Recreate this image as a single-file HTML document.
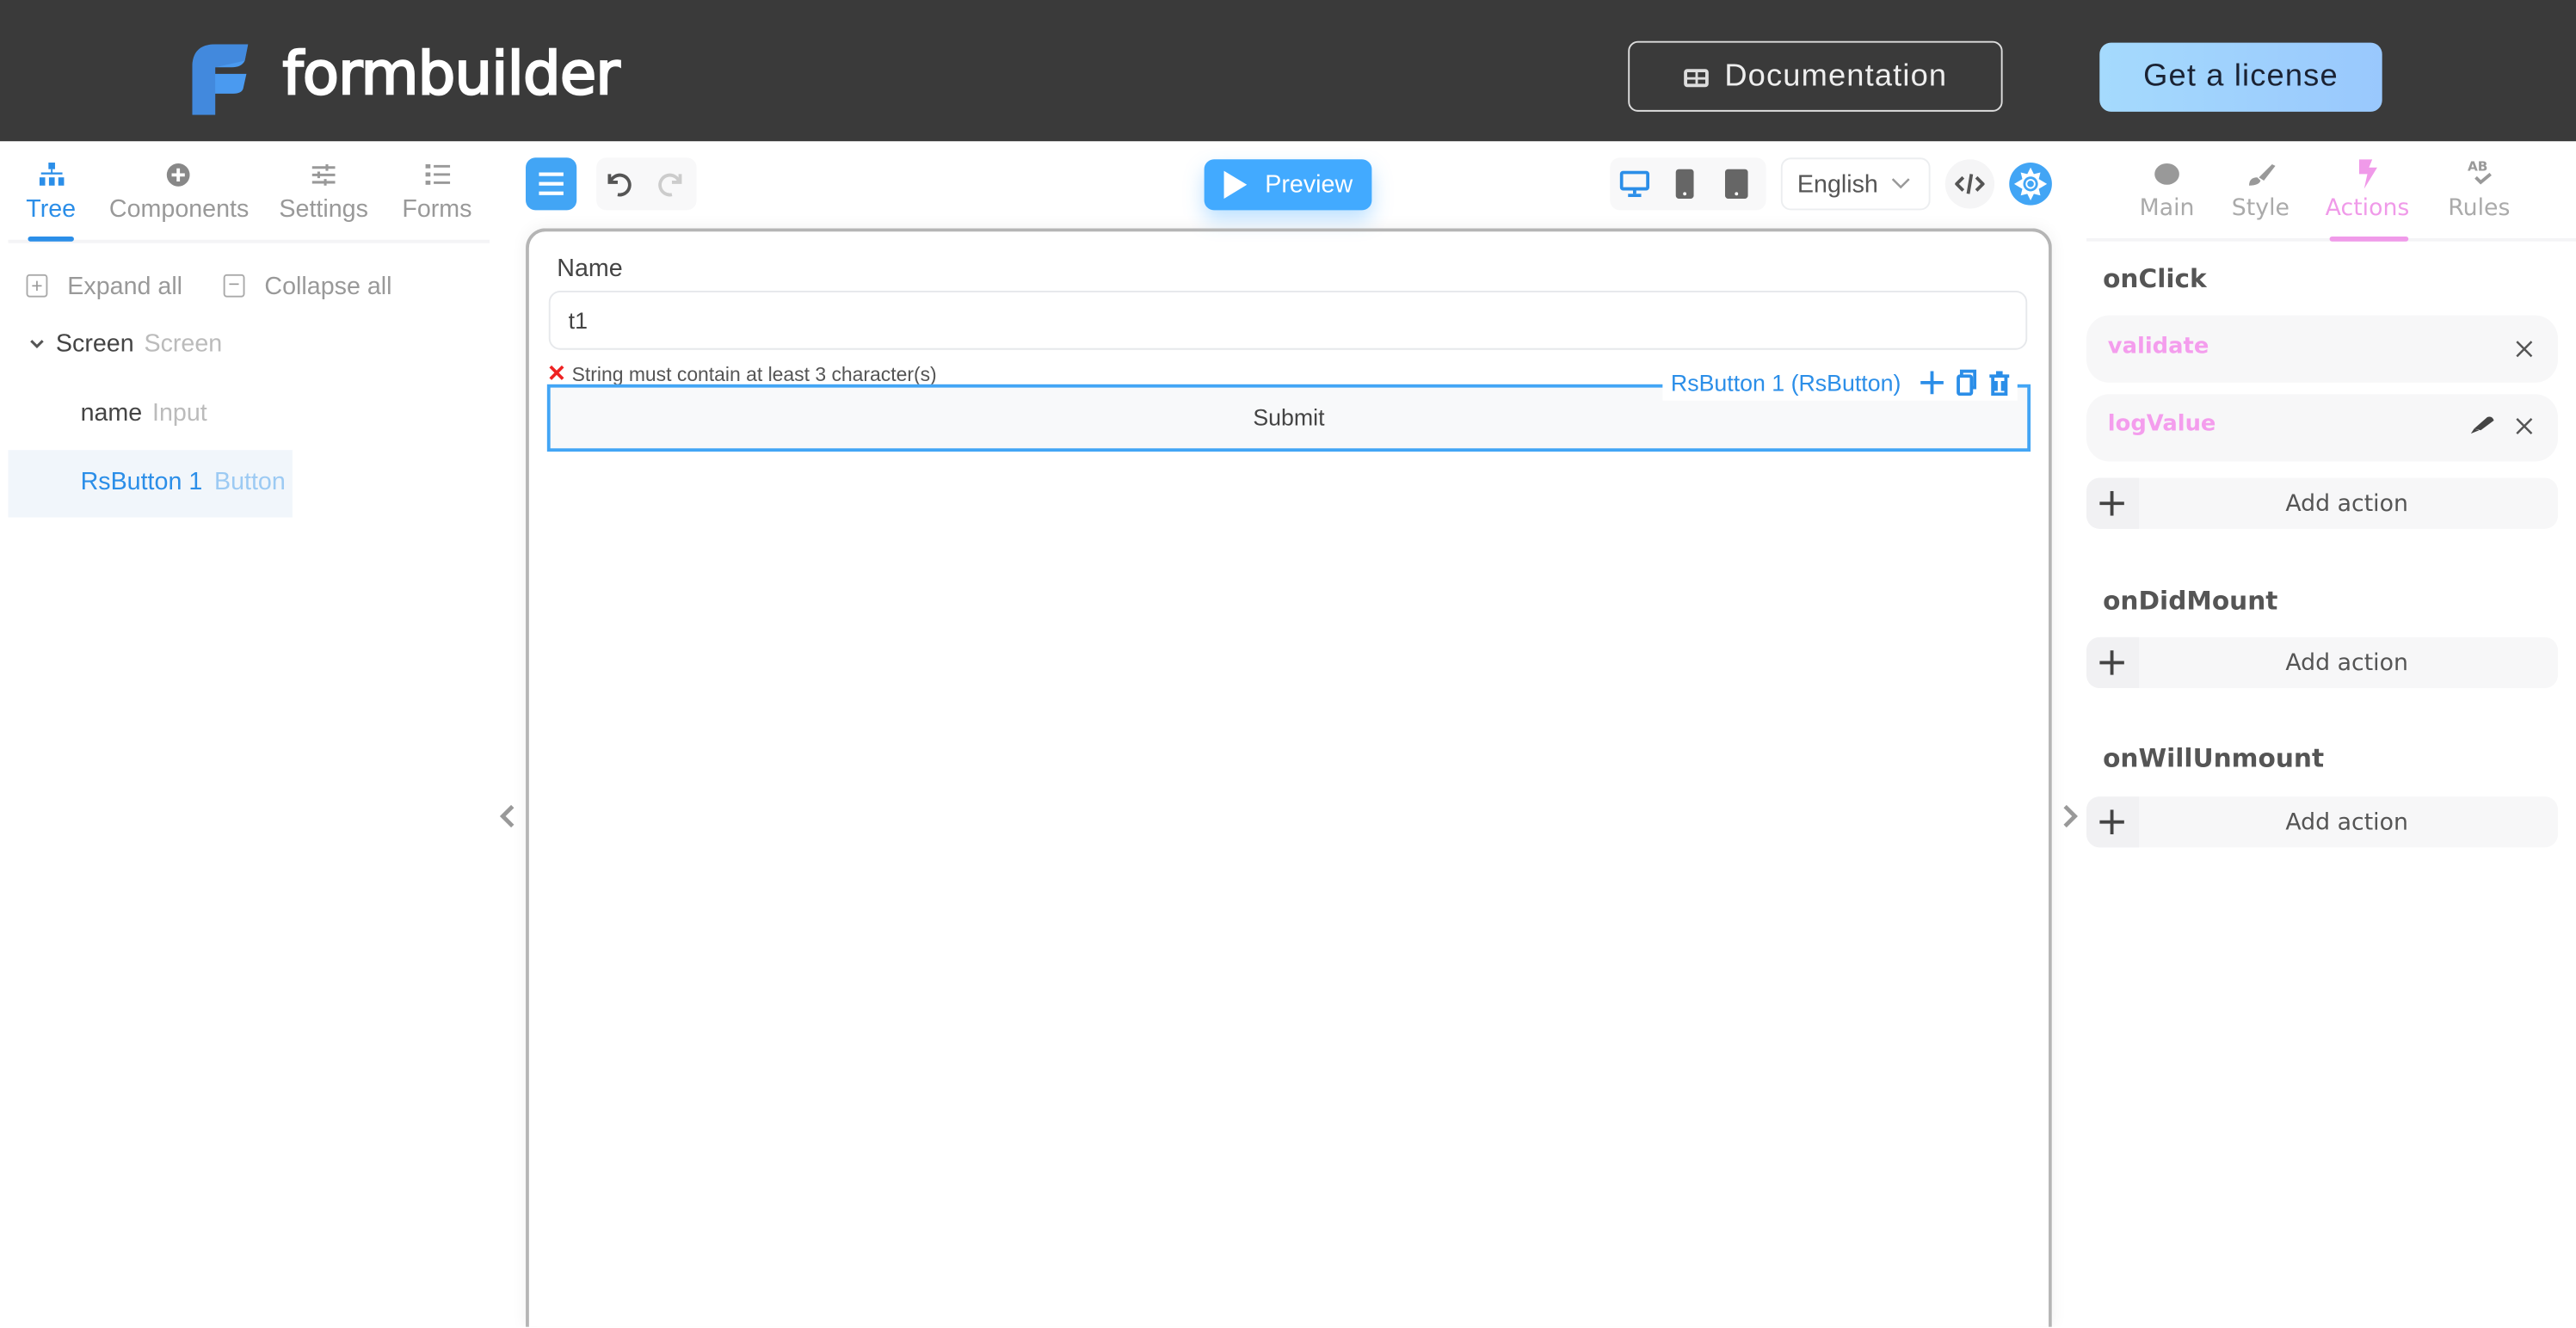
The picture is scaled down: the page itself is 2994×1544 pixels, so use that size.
<!DOCTYPE html>
<html><head><meta charset="utf-8">
<style>
html,body{margin:0;padding:0;width:2994px;height:1544px;overflow:hidden;background:#fff}
#s{position:absolute;left:0;top:0;width:1568px;height:808px;transform:scale(1.90944);transform-origin:0 0;font-family:"Liberation Sans",sans-serif;color:#444;overflow:hidden}
.a{position:absolute}
.hdr{left:0;top:0;width:1568px;height:86px;background:#3a3a3a}
.tab{position:absolute;top:119px;font-size:15px;color:#999;transform:translateX(-50%);white-space:nowrap}
.rt{position:absolute;top:119px;font-size:14px;color:#aaa;font-family:"DejaVu Sans",sans-serif;transform:translateX(-50%)}
.card{position:absolute;left:1270px;width:287px;background:#f7f7f8;border-radius:14px}
.add{position:absolute;left:1270px;width:287px;height:31px;background:#f7f7f8;border-radius:8px;font-family:"DejaVu Sans",sans-serif;font-size:14px;color:#555}
.add .p{position:absolute;left:0;top:0;width:32px;height:31px;background:#f1f1f3;border-radius:8px 0 0 8px}
.add span{position:absolute;left:0;right:0;top:8px;text-align:center;padding-left:30px}
.ev{position:absolute;left:1280px;font-family:"DejaVu Sans",sans-serif;font-weight:bold;font-size:15.5px;color:#555}
</style></head><body><div id="s">
<div class="a hdr"></div>
<svg class="a" style="left:117px;top:27px" width="34" height="43" viewBox="0 0 34 43"><path d="M0 14 Q0 0 14 0 L34 0 L32 10 Q30 14 24 14 L14 14 L14 18 L33 18 L31 27 Q30 30 25 30 L14 30 L14 43 L0 43Z" fill="#4a9af0"/><path d="M0 14 Q0 0 14 0 L34 0 L32 10 L14 14 L14 43 L0 43Z" fill="#3d7fd1" opacity=".6"/></svg>
<div class="a" style="left:172px;top:25px;font-family:'DejaVu Sans',sans-serif;font-size:36px;color:#fff;letter-spacing:-0.4px;-webkit-text-stroke:1.3px #fff">formbuilder</div>
<div class="a" style="left:991px;top:25px;width:228px;height:43px;border:1px solid #ddd;border-radius:6px;box-sizing:border-box;color:#eee;font-family:'Liberation Sans',sans-serif;font-size:19px;letter-spacing:0.6px;line-height:41px;text-align:center"><span style="display:inline-block;width:15px;height:11px;border:2px solid #ddd;border-radius:2px;vertical-align:-1px;margin-right:10px;box-sizing:border-box;background:linear-gradient(#ddd,#ddd) 0 3px/100% 1.5px no-repeat,linear-gradient(#ddd,#ddd) 5px 0/1.5px 100% no-repeat"></span>Documentation</div>
<div class="a" style="left:1278px;top:26px;width:172px;height:42px;border-radius:7px;background:linear-gradient(90deg,#a5dafd,#99c8fd);color:#1a2233;font-family:'Liberation Sans',sans-serif;font-size:19px;letter-spacing:0.6px;line-height:42px;text-align:center">Get a license</div>

<!-- left panel -->
<svg class="a" style="left:24px;top:99px" width="15" height="15" viewBox="0 0 15 15" fill="#2b8ee8"><rect x="5.5" y="0" width="4" height="4"/><rect x="7" y="4" width="1" height="3"/><rect x="1" y="6" width="13" height="1.2"/><rect x="0" y="9" width="3.5" height="5"/><rect x="5.8" y="9" width="3.5" height="5"/><rect x="11.5" y="9" width="3.5" height="5"/></svg>
<div class="tab" style="left:31px;color:#2b8ee8">Tree</div>
<svg class="a" style="left:101px;top:99px" width="15" height="15"><circle cx="7.5" cy="7.5" r="7" fill="#888"/><path d="M7.5 3.5v8M3.5 7.5h8" stroke="#fff" stroke-width="2"/></svg>
<div class="tab" style="left:109px">Components</div>
<svg class="a" style="left:189px;top:99px" width="16" height="15" stroke="#999" stroke-width="1.6"><path d="M1 3h14M1 7.5h14M1 12h14"/><path d="M10 1v4M5 5.5v4M9 10v4"/></svg>
<div class="tab" style="left:197px">Settings</div>
<svg class="a" style="left:259px;top:99px" width="15" height="15" fill="#999"><rect x="0" y="1" width="3" height="2.5"/><rect x="0" y="6" width="3" height="2.5"/><rect x="0" y="11" width="3" height="2.5"/><rect x="5" y="1.5" width="10" height="1.5"/><rect x="5" y="6.5" width="10" height="1.5"/><rect x="5" y="11.5" width="10" height="1.5"/></svg>
<div class="tab" style="left:266px">Forms</div>
<div class="a" style="left:5px;top:146px;width:293px;height:2px;background:#f4f4f6"></div>
<div class="a" style="left:17px;top:144px;width:28px;height:3px;border-radius:2px;background:#2b8ee8"></div>
<div class="a" style="left:16px;top:167px;width:13px;height:14px;border:1px solid #aaa;border-radius:2px;box-sizing:border-box;font-size:12px;line-height:12px;text-align:center;color:#999">+</div>
<div class="a" style="left:41px;top:166px;font-size:15px;color:#999">Expand all</div>
<div class="a" style="left:136px;top:167px;width:13px;height:14px;border:1px solid #aaa;border-radius:2px;box-sizing:border-box;font-size:12px;line-height:11px;text-align:center;color:#999">−</div>
<div class="a" style="left:161px;top:166px;font-size:15px;color:#999">Collapse all</div>
<svg class="a" style="left:18px;top:206px" width="9" height="7"><path d="M1 1.5l3.5 3.5 3.5-3.5" stroke="#555" stroke-width="1.6" fill="none"/></svg>
<div class="a" style="left:34px;top:201px;font-size:15px;color:#444">Screen <span style="color:#bbb;margin-left:2px">Screen</span></div>
<div class="a" style="left:49px;top:243px;font-size:15px;color:#444">name <span style="color:#bbb;margin-left:2px">Input</span></div>
<div class="a" style="left:5px;top:274px;width:173px;height:41px;background:#f1f6fb"></div>
<div class="a" style="left:49px;top:285px;font-size:15px;color:#2b8ee8">RsButton 1 <span style="color:#9ccaf3;margin-left:3px">Button</span></div>
<svg class="a" style="left:303px;top:489px" width="12" height="16"><path d="M9 2L3 8l6 6" stroke="#999" stroke-width="2.5" fill="none"/></svg>
<svg class="a" style="left:1254px;top:489px" width="12" height="16"><path d="M3 2l6 6-6 6" stroke="#999" stroke-width="2.5" fill="none"/></svg>

<!-- toolbar -->
<div class="a" style="left:320px;top:96px;width:31px;height:32px;border-radius:6px;background:#42a5f5"></div>
<svg class="a" style="left:328px;top:105px" width="15" height="14" fill="#fff"><rect y="0" width="15" height="2.2"/><rect y="5.8" width="15" height="2.2"/><rect y="11.6" width="15" height="2.2"/></svg>
<div class="a" style="left:363px;top:96px;width:61px;height:32px;border-radius:6px;background:#f8f8f9"></div>
<svg class="a" style="left:367px;top:102px" width="20" height="20"><path d="M4 4v5h5" stroke="#555" stroke-width="2" fill="none"/><path d="M4.5 9A6 6 0 1 1 9 16.5" stroke="#555" stroke-width="2" fill="none"/></svg>
<svg class="a" style="left:398px;top:102px" width="20" height="20"><path d="M16 4v5h-5" stroke="#ccc" stroke-width="2" fill="none"/><path d="M15.5 9A6 6 0 1 0 11 16.5" stroke="#ccc" stroke-width="2" fill="none"/></svg>
<div class="a" style="left:733px;top:97px;width:102px;height:31px;border-radius:6px;background:#42aaff;box-shadow:0 6px 12px rgba(66,170,255,.35)"></div>
<svg class="a" style="left:745px;top:104px" width="14" height="17"><path d="M0 0L14 8.5 0 17Z" fill="#fff"/></svg>
<div class="a" style="left:770px;top:104px;font-size:15px;color:#fff">Preview</div>
<div class="a" style="left:980px;top:96px;width:95px;height:32px;border-radius:6px;background:#f8f8f9"></div>
<svg class="a" style="left:986px;top:104px" width="18" height="16"><rect x="1" y="1" width="16" height="10" rx="1" stroke="#2b8ee8" stroke-width="2" fill="none"/><rect x="8" y="11" width="2" height="3" fill="#2b8ee8"/><rect x="5" y="14" width="8" height="2" fill="#2b8ee8"/></svg>
<svg class="a" style="left:1020px;top:103px" width="11" height="18"><rect x="0" y="0" width="11" height="18" rx="2" fill="#666"/><circle cx="5.5" cy="15" r="1" fill="#fff"/></svg>
<svg class="a" style="left:1050px;top:103px" width="14" height="18"><rect x="0" y="0" width="14" height="18" rx="2" fill="#666"/><circle cx="7" cy="15" r="1" fill="#fff"/></svg>
<div class="a" style="left:1084px;top:96px;width:91px;height:32px;border:1px solid #eceef0;border-radius:6px;box-sizing:border-box"></div>
<div class="a" style="left:1094px;top:104px;font-size:15px;color:#555">English</div>
<svg class="a" style="left:1151px;top:108px" width="12" height="8"><path d="M1 1l5 5 5-5" stroke="#999" stroke-width="1.3" fill="none"/></svg>
<div class="a" style="left:1184px;top:97px;width:30px;height:30px;border-radius:15px;background:#f5f5f6"></div>
<svg class="a" style="left:1190px;top:104px" width="18" height="16" stroke="#555" stroke-width="2" fill="none"><path d="M5 4L1 8l4 4M13 4l4 4-4 4M10 2L8 14"/></svg>
<div class="a" style="left:1223px;top:99px;width:26px;height:26px;border-radius:13px;background:#42a5f5"></div>
<svg class="a" style="left:1226px;top:102px" width="20" height="20"><g fill="#fff"><polygon points="10,0 12,4 16,3 15,7 20,10 15,13 16,17 12,16 10,20 8,16 4,17 5,13 0,10 5,7 4,3 8,4"/></g><circle cx="10" cy="10" r="4.5" fill="#42a5f5"/><circle cx="10" cy="10" r="3" fill="#fff"/><circle cx="10" cy="10" r="2" fill="#42a5f5"/></svg>

<!-- canvas -->
<div class="a" style="left:320px;top:139px;width:929px;height:669px;border:2px solid #b5b5b5;border-bottom:none;border-radius:12px 12px 0 0;box-sizing:border-box;box-shadow:0 0 10px rgba(0,0,0,.06)"></div>
<div class="a" style="left:339px;top:155px;font-size:15px;color:#444">Name</div>
<div class="a" style="left:334px;top:177px;width:900px;height:36px;border:1px solid #e6e8eb;border-radius:7px;box-sizing:border-box"></div>
<div class="a" style="left:346px;top:187px;font-size:14px;color:#444">t1</div>
<div class="a" style="left:333px;top:219px;font-size:12px;color:#555"><span style="color:#e22;font-weight:bold;font-size:14px">✕</span> String must contain at least 3 character(s)</div>
<div class="a" style="left:333px;top:234px;width:903px;height:41px;border:2px solid #42a5f5;box-sizing:border-box;background:#f8f9fa"></div>
<div class="a" style="left:333px;top:246px;width:903px;text-align:center;font-size:14px;color:#444">Submit</div>
<div class="a" style="left:1012px;top:224px;width:216px;height:20px;background:#fff"></div>
<div class="a" style="left:1017px;top:225px;font-size:14px;color:#2b8ee8">RsButton 1 (RsButton)</div>
<svg class="a" style="left:1169px;top:225px" width="56" height="16" stroke="#2b8ee8" stroke-width="2" fill="none"><path d="M7 1v14M0 8h14"/><rect x="23" y="4" width="8" height="11" rx="1"/><path d="M25 4V1h8v10h-2"/><path d="M42 4h12M44 4v11h8V4M46 2h4M46 7v6M50 7v6"/></svg>

<!-- right panel -->
<svg class="a" style="left:1311px;top:99px" width="16" height="14"><ellipse cx="8" cy="7" rx="7.5" ry="6.5" fill="#999"/></svg>
<div class="rt" style="left:1319px">Main</div>
<svg class="a" style="left:1368px;top:99px" width="18" height="15" fill="#999"><path d="M7 9l8-8 2 1-7 9z"/><path d="M1 14q0-5 5-5l2 2q-1 3-7 3z"/></svg>
<div class="rt" style="left:1376px">Style</div>
<svg class="a" style="left:1434px;top:97px" width="15" height="18" fill="#f09ae9"><path d="M2 0h8L8 5h5L5 18l2-9H2z"/></svg>
<div class="rt" style="left:1441px;color:#f09ae9">Actions</div>
<div class="a" style="left:1502px;top:97px;font-family:'DejaVu Sans',sans-serif;font-weight:bold;font-size:8px;color:#999">AB</div>
<svg class="a" style="left:1506px;top:105px" width="12" height="8"><path d="M1 3l3 3 6-5" stroke="#999" stroke-width="2" fill="none"/></svg>
<div class="rt" style="left:1509px">Rules</div>
<div class="a" style="left:1270px;top:145px;width:298px;height:2px;background:#f4f4f6"></div>
<div class="a" style="left:1418px;top:144px;width:48px;height:3px;border-radius:2px;background:#f09ae9"></div>

<div class="ev" style="top:161px">onClick</div>
<div class="card" style="top:192px;height:41px"></div>
<div class="a" style="left:1283px;top:203px;font-family:'DejaVu Sans',sans-serif;font-weight:bold;font-size:13.5px;color:#f49ded">validate</div>
<svg class="a" style="left:1531px;top:207px" width="11" height="11" stroke="#555" stroke-width="1.3"><path d="M1 1l9 9M10 1l-9 9"/></svg>
<div class="card" style="top:240px;height:41px"></div>
<div class="a" style="left:1283px;top:250px;font-family:'DejaVu Sans',sans-serif;font-weight:bold;font-size:13.5px;color:#f49ded">logValue</div>
<svg class="a" style="left:1504px;top:253px" width="15" height="11" fill="#444"><path d="M2 8l8-7q3-1 4 2l-8 6z"/><path d="M0 11l2-3 3 1z"/></svg>
<svg class="a" style="left:1531px;top:254px" width="11" height="11" stroke="#555" stroke-width="1.3"><path d="M1 1l9 9M10 1l-9 9"/></svg>
<div class="add" style="top:291px"><div class="p"></div><span>Add action</span></div>
<div class="ev" style="top:357px">onDidMount</div>
<div class="add" style="top:388px"><div class="p"></div><span>Add action</span></div>
<div class="ev" style="top:453px">onWillUnmount</div>
<div class="add" style="top:485px"><div class="p"></div><span>Add action</span></div>
<svg class="a" style="left:1278px;top:299px" width="15" height="15" stroke="#444" stroke-width="2"><path d="M7.5 0v15M0 7.5h15"/></svg>
<svg class="a" style="left:1278px;top:396px" width="15" height="15" stroke="#444" stroke-width="2"><path d="M7.5 0v15M0 7.5h15"/></svg>
<svg class="a" style="left:1278px;top:493px" width="15" height="15" stroke="#444" stroke-width="2"><path d="M7.5 0v15M0 7.5h15"/></svg>
</div></body></html>
